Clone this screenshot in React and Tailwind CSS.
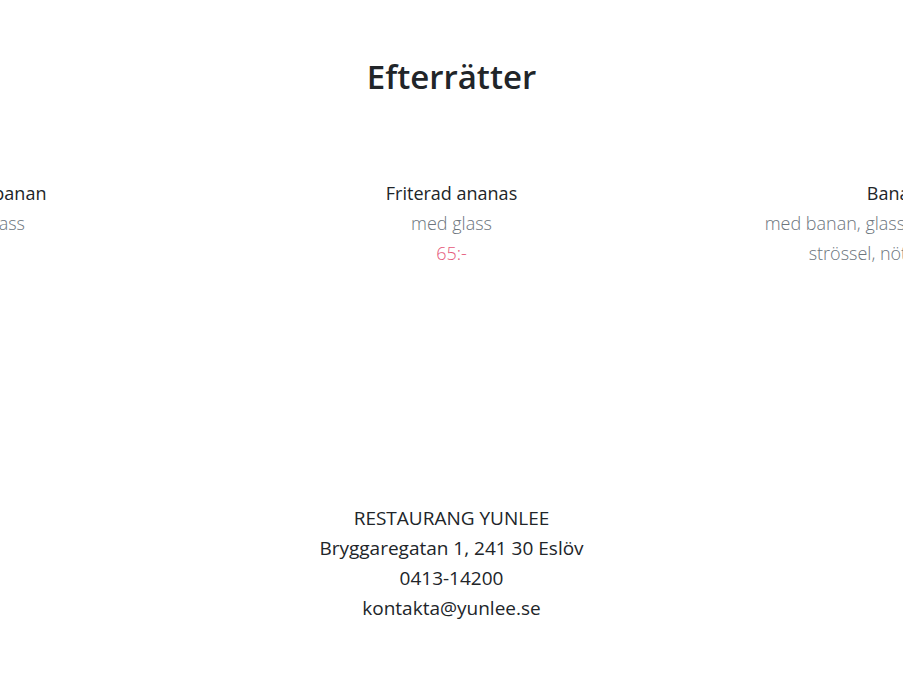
const desserts = [
  { name: "Friterad banan", desc: "med glass", price: "65:-" },
  { name: "Friterad ananas", desc: "med glass", price: "65:-" },
  { name: "Banana split", desc: "med banan, glass, grädde, chokladsås, strössel, nötter och kolasås", price: "95:-" },
];

const DessertCard = ({ name, desc, price }) => {
  return (
    <div className="w-[467px] shrink-0 px-[68px] text-center text-[18px] leading-[30px]">
      <p className="text-[#212529]">{name}</p>
      <p className="font-light text-[#6c757d]">{desc}</p>
      <p className="font-light text-[#e5587a]">{price}</p>
    </div>
  );
};

export default function App() {
  return (
    <div className="min-h-screen w-[903px] overflow-hidden bg-white font-['Open_Sans',sans-serif]">
      <h1 className="pt-[55px] text-center text-[33px] font-semibold leading-[44px] text-[#212529]">
        Efterrätter
      </h1>

      {/* Carousel, middle slide centered */}
      <div className="mt-[79px] flex justify-center">
        <div className="flex">
          {desserts.map((d) => (
            <DessertCard key={d.name} {...d} />
          ))}
        </div>
      </div>

      <footer className="mt-[205px] text-center text-[19px] leading-[30px] text-[#212529]">
        <p>RESTAURANG YUNLEE</p>
        <p>Bryggaregatan 1, 241 30 Eslöv</p>
        <p>0413-14200</p>
        <p>kontakta@yunlee.se</p>
      </footer>
    </div>
  );
}
